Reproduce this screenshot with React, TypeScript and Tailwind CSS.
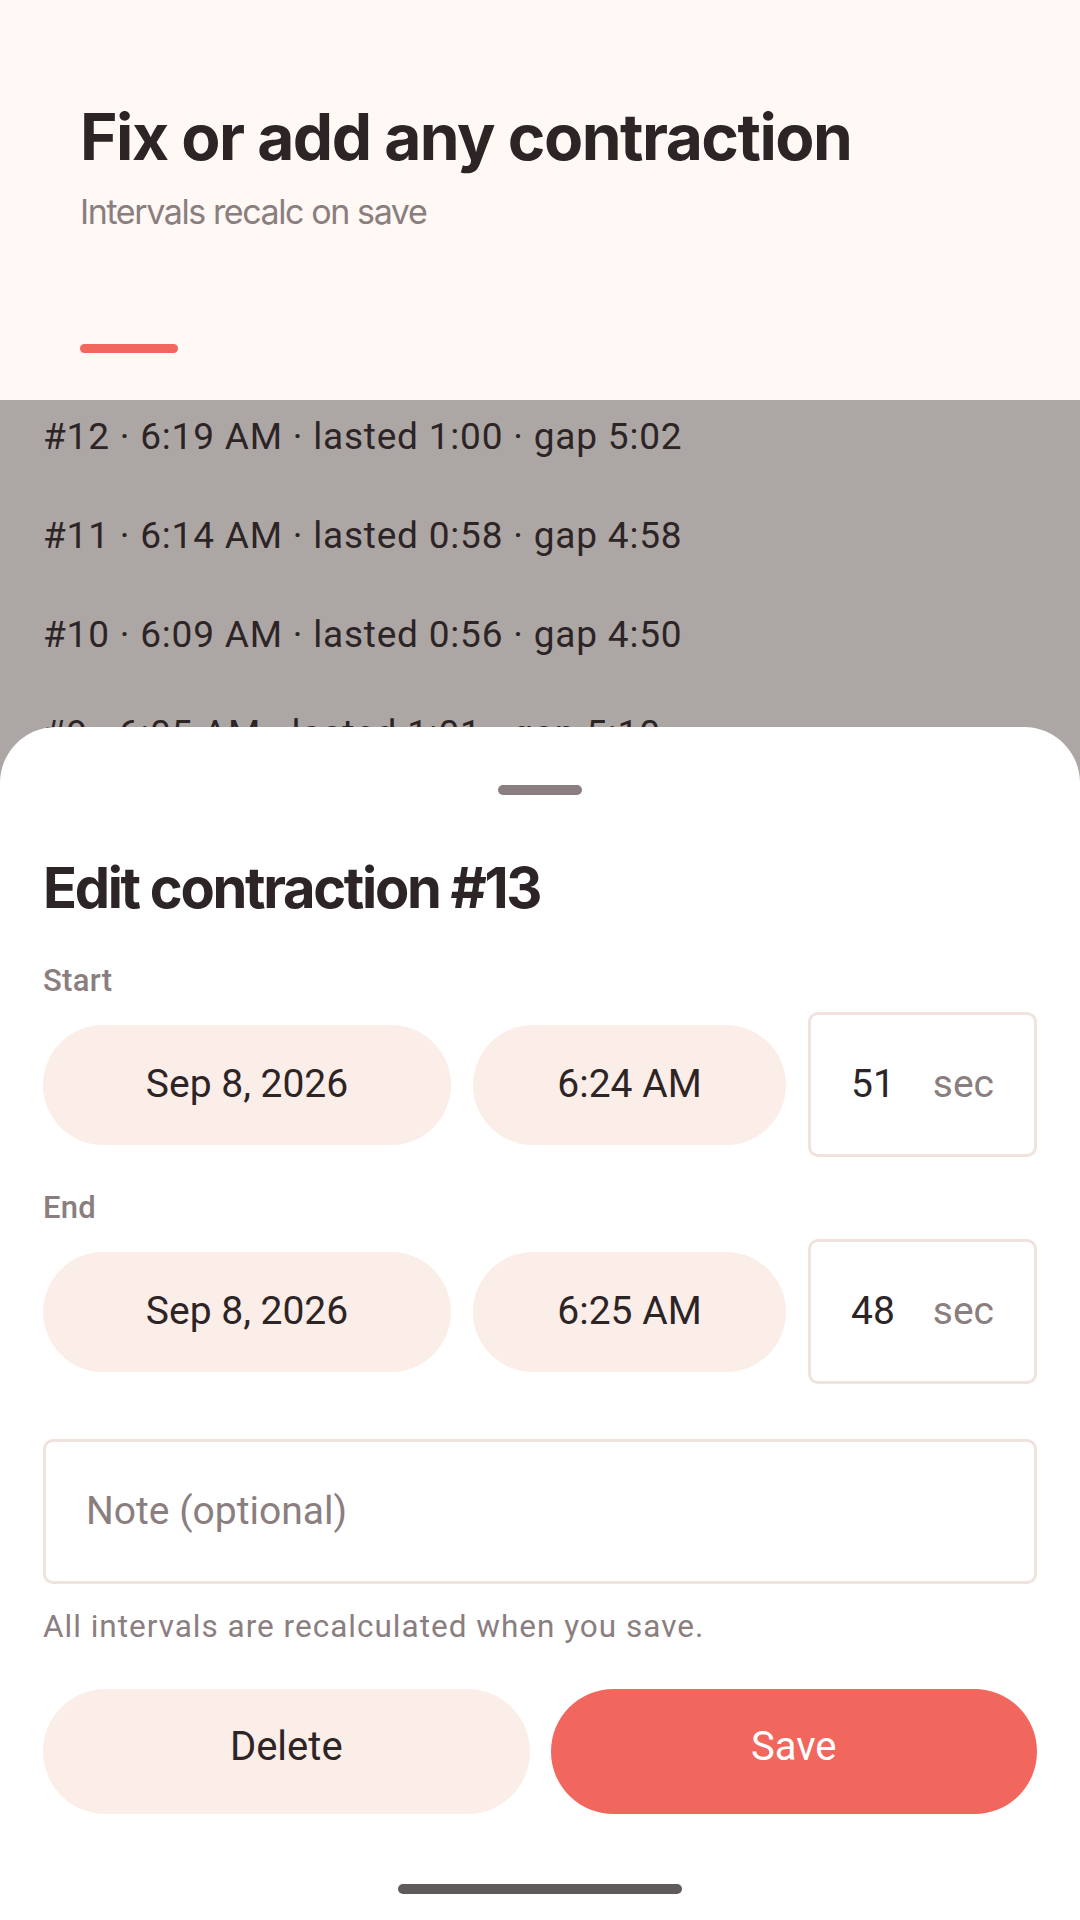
const ROWS = [
  '#12 · 6:19 AM · lasted 1:00 · gap 5:02',
  '#11 · 6:14 AM · lasted 0:58 · gap 4:58',
  '#10 · 6:09 AM · lasted 0:56 · gap 4:50',
  '#9 · 6:05 AM · lasted 1:01 · gap 5:10',
]

const inter = "font-['Inter','Roboto',sans-serif]"
const roboto = "font-['Roboto','Liberation_Sans',sans-serif]"

function TimeRow({ date, time, sec }: { date: string; time: string; sec: string }) {
  return (
    <div className="flex items-center gap-[22px] h-[145px]">
      <div className="w-[408px] h-[120px] rounded-full bg-[#fbeee8] flex items-center justify-center text-[39px] text-[#2d2426]">
        {date}
      </div>
      <div className="w-[313px] h-[120px] rounded-full bg-[#fbeee8] flex items-center justify-center text-[39px] text-[#2d2426]">
        {time}
      </div>
      <div className="flex-1 h-[145px] rounded-[10px] border-[3px] border-[#f0e3de] px-[40px] flex items-center justify-between text-[39px]">
        <span className="text-[#2d2426]">{sec}</span>
        <span className="text-[#8a7e7f]">sec</span>
      </div>
    </div>
  )
}

export default function App() {
  return (
    <div className={`relative w-[1080px] h-[1920px] overflow-hidden bg-[#aca7a4] ${roboto}`}>
      {/* header */}
      <div className="h-[400px] bg-[#fff8f4] px-[80px] pt-[99px]">
        <h1 className={`${inter} text-[64px] leading-[76px] font-bold tracking-[-1.5px] text-[#2d2426]`}>
          Fix or add any contraction
        </h1>
        <p className={`${inter} mt-[17px] text-[34px] leading-[40px] tracking-[-1.4px] text-[#8a7e7f]`}>
          Intervals recalc on save
        </p>
        <div className="mt-[112px] w-[98px] h-[9px] rounded-full bg-[#f2675d]" />
      </div>

      {/* list under scrim */}
      <div className="px-[43px] pt-[15px] flex flex-col gap-[55px]">
        {ROWS.map(r => (
          <div key={r} className="text-[37px] leading-[44px] tracking-[0.8px] text-[#2d2426]">{r}</div>
        ))}
      </div>

      {/* bottom sheet */}
      <div className="absolute left-0 right-0 bottom-0 h-[1193px] bg-white rounded-t-[56px] px-[43px] flex flex-col">
        <div className="mt-[58px] mx-auto w-[84px] h-[10px] rounded-full bg-[#8a7e80]" />
        <h2 className={`${inter} mt-[59px] text-[56px] leading-[68px] font-bold tracking-[-2.3px] text-[#2d2426]`}>
          Edit contraction #13
        </h2>

        <div className="mt-[41px] text-[31px] leading-[36px] font-medium tracking-[0.3px] text-[#8a7e7f]">Start</div>
        <div className="mt-[13px]">
          <TimeRow date="Sep 8, 2026" time="6:24 AM" sec="51" />
        </div>

        <div className="mt-[33px] text-[31px] leading-[36px] font-medium tracking-[0.3px] text-[#8a7e7f]">End</div>
        <div className="mt-[13px]">
          <TimeRow date="Sep 8, 2026" time="6:25 AM" sec="48" />
        </div>

        <div className="mt-[55px] h-[145px] rounded-[10px] border-[3px] border-[#f0e3de] px-[40px] flex items-center text-[39px] text-[#8a7e7f]">
          Note (optional)
        </div>

        <p className="mt-[25px] text-[31.5px] leading-[36px] tracking-[1px] text-[#8a7e7f]">
          All intervals are recalculated when you save.
        </p>

        <div className="mt-[44px] grid grid-cols-2 gap-[21px]">
          <button type="button" className="h-[125px] pb-[9px] rounded-full bg-[#fbeee8] text-[40px] text-[#2d2426]">
            Delete
          </button>
          <button type="button" className="h-[125px] pb-[9px] rounded-full bg-[#f2675d] text-[40px] text-white">
            Save
          </button>
        </div>

        <div className="mt-[70px] mx-auto w-[284px] h-[10px] rounded-full bg-[#5f5a5b]" />
      </div>
    </div>
  )
}
